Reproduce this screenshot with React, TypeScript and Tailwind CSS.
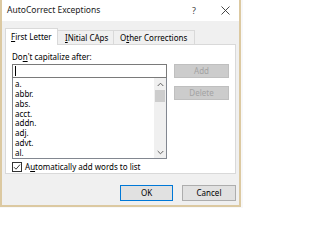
import React from "react";

const items = ["a.", "abbr.", "abs.", "acct.", "addn.", "adj.", "advt.", "al."];

export default function App() {
  return (
    <div className="w-[243px] h-[208px] bg-[#f8f8f8] flex" style={{ fontFamily: '"Noto Sans", "Open Sans", sans-serif' }}>
      <div className="w-[241px] h-[207px] border-l-2 border-r-2 border-b-2 border-[#dcc9a1] bg-[#f0f0f0] flex flex-col text-[#000]">
        {/* title bar */}
        <div className="h-[21px] bg-white flex items-center pl-[5px] shrink-0">
          <span className="text-[8.5px] leading-none text-[#1a1a1a]">AutoCorrect Exceptions</span>
          <span className="ml-auto w-[12px] text-center text-[9px] leading-none text-[#444]">?</span>
          <span className="ml-[19px] mr-[8px] w-[12px] flex justify-center">
            <svg width="9" height="9" viewBox="0 0 9 9">
              <path d="M0.5 0.5 L8.5 8.5 M8.5 0.5 L0.5 8.5" stroke="#333" strokeWidth="0.9" />
            </svg>
          </span>
        </div>
        {/* body */}
        <div className="flex-1 flex flex-col px-[3px] pt-[7px]">
          {/* tabs */}
          <div className="flex items-end h-[16px] text-[8px] leading-none relative z-10">
            <div className="w-[53px] h-[17px] bg-white border border-b-0 border-[#d9d9d9] flex items-center pl-[5px] mb-[-1px]">
              <span><span className="underline">F</span>irst Letter</span>
            </div>
            <div className="w-[56px] h-[14px] border border-l-0 border-b-0 border-[#d9d9d9] flex items-center pl-[7px]">
              <span><span className="underline">I</span>Nitial CAps</span>
            </div>
            <div className="w-[81px] h-[14px] border border-l-0 border-b-0 border-[#d9d9d9] flex items-center pl-[6px]">
              <span>O<span className="underline">t</span>her Corrections</span>
            </div>
          </div>
          {/* panel */}
          <div className="w-[231px] h-[130px] bg-white border border-[#d9d9d9] flex flex-col px-[6px] pt-[6px] text-[8px] leading-none">
            <div className="h-[12px] flex items-center">
              Do<span className="underline">n</span>'t capitalize after:
            </div>
            <div className="flex mt-[1px]">
              <div className="w-[156px] flex flex-col">
                <div className="h-[14px] border border-[#7a7a7a] flex items-center pl-[2px]">
                  <div className="w-[1px] h-[10px] bg-black" />
                </div>
                <div className="h-[81px] border border-t-0 border-[#828790] flex">
                  <div className="flex-1 flex flex-col pl-[2px] pt-[1px]">
                    {items.map((it) => (
                      <div key={it} className="h-[10px] flex items-center">{it}</div>
                    ))}
                  </div>
                  <div className="w-[12px] bg-[#f0f0f0] flex flex-col items-center">
                    <div className="h-[12px] flex items-center justify-center">
                      <svg width="7" height="5" viewBox="0 0 7 5">
                        <path d="M0.7 4 L3.5 1.2 L6.3 4" fill="none" stroke="#606060" strokeWidth="1" />
                      </svg>
                    </div>
                    <div className="w-[10px] h-[12px] bg-[#cdcdcd]" />
                    <div className="flex-1" />
                    <div className="h-[12px] flex items-center justify-center">
                      <svg width="7" height="5" viewBox="0 0 7 5">
                        <path d="M0.7 1 L3.5 3.8 L6.3 1" fill="none" stroke="#606060" strokeWidth="1" />
                      </svg>
                    </div>
                  </div>
                </div>
              </div>
              <div className="ml-[7px] flex flex-col gap-[8px]">
                <div className="w-[55px] h-[14px] bg-[#cccccc] border border-[#bfbfbf] flex items-center justify-center text-[#a3a3a3]">
                  <span>Add</span>
                </div>
                <div className="w-[55px] h-[14px] bg-[#cccccc] border border-[#bfbfbf] flex items-center justify-center text-[#a3a3a3]">
                  <span>Delete</span>
                </div>
              </div>
            </div>
            <div className="flex items-center mt-[3px] h-[10px]">
              <div className="w-[10px] h-[10px] border border-[#333] bg-white flex items-center justify-center">
                <svg width="8" height="8" viewBox="0 0 8 8">
                  <path d="M1 4.2 L3 6.2 L7 1.6" fill="none" stroke="#222" strokeWidth="0.9" />
                </svg>
              </div>
              <span className="ml-[3px]">A<span className="underline">u</span>tomatically add words to list</span>
            </div>
          </div>
          {/* footer */}
          <div className="flex justify-end mt-[11px] gap-[9px] text-[8px] leading-none">
            <div className="w-[53px] h-[16px] bg-[#e1e1e1] border border-[#0078d7] flex items-center justify-center">OK</div>
            <div className="w-[54px] h-[16px] bg-[#e1e1e1] border border-[#adadad] flex items-center justify-center">Cancel</div>
          </div>
        </div>
      </div>
    </div>
  );
}
